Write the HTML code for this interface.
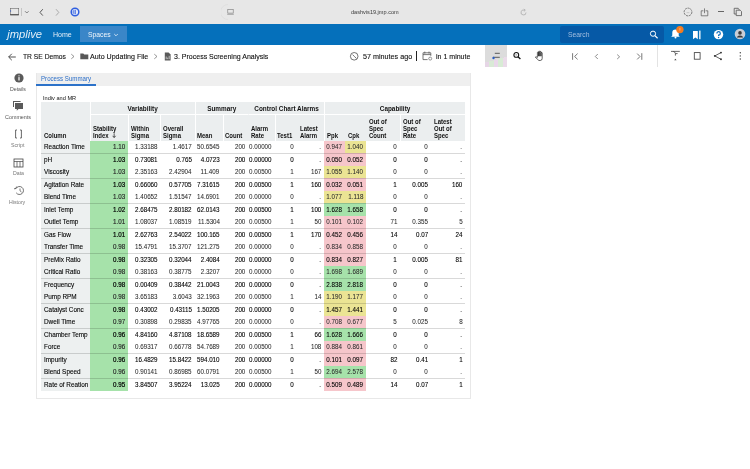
<!DOCTYPE html>
<html><head><meta charset="utf-8">
<style>
*{box-sizing:border-box;margin:0;padding:0}
html,body{width:750px;height:469px;overflow:hidden;background:#fff;-webkit-font-smoothing:antialiased;font-family:"Liberation Sans",sans-serif;color:#222}
.abs{position:absolute}
#chrome{position:absolute;left:0;top:0;width:750px;height:23.5px;background:#e7e7e7}
#nav{position:absolute;left:0;top:23.5px;width:750px;height:21px;background:#0570bb}
.t{position:absolute;white-space:nowrap;line-height:1}
#panel{position:absolute;left:36px;top:72.8px;width:434.5px;height:326.7px;border:1px solid #e8e8e8;border-top:none;background:#fff}
#tabstrip{position:absolute;left:0;top:0;width:100%;height:12.9px;background:#efefef}
table{position:absolute;left:4px;top:29.2px;border-collapse:separate;border-spacing:0;table-layout:fixed;width:424px;font-size:6.4px}
td{font-size:6.8px}
td,th{white-space:nowrap;overflow:hidden}
th{background:#ebeeef;font-weight:bold;color:#111;border-left:1px solid #fff;border-bottom:1px solid #fff;text-align:left;vertical-align:bottom;padding:0 2px 1.8px 1.9px;line-height:6.6px}
tr.h2 th{border-bottom:none}
th.nb{border-left-color:#ebeeef}
th.g{text-align:center;vertical-align:middle;padding:3px 0 0 0;height:13px}
th b{display:inline-block;transform:scaleX(.94);transform-origin:0 100%}
th.g b{transform:none}
td{height:12.5px;text-align:right;padding:0 2.8px 0 2px;color:#000;line-height:6px}
td i{font-style:normal;display:inline-block;margin-left:-12px;-webkit-text-stroke:0.1px #000;transform:scaleX(.92);transform-origin:100% 50%}
td.c i{transform-origin:0 50%;margin-left:0;transform:scaleX(.94)}
td.s i{-webkit-text-stroke:0.2px #000}
td.c{text-align:left;background:#edf0f0;padding-left:2.5px}
td.s{background:#a6e2aa;padding-right:3.5px}
td.p{background:#f6c6cb}
td.y{background:#ebe494}
td.gr{background:#a6e2aa}
tr:not(.sep):not(.h2) td i{color:#2a2a2a;-webkit-text-stroke:0.05px #333}
tr:not(.sep):not(.h2) td.c i{color:#000;-webkit-text-stroke:0.1px #000}
tr:not(.sep):not(.h2) td.s i{-webkit-text-stroke:0.15px #222}
tr.sep td i{-webkit-text-stroke:0.1px #000}
tr.sep td.s i{-webkit-text-stroke:0.2px #000}
tr.sep td{border-top:1px solid rgba(0,0,0,.15)}
#wrap{position:absolute;left:0;top:0;width:750px;height:469px;will-change:transform}
</style></head><body><div id="wrap">
<div id="chrome">
<svg class="abs" style="left:8px;top:6px" width="14" height="12" viewBox="0 0 14 12"><rect x="2.3" y="2.6" width="8.4" height="6.2" fill="none" stroke="#6a6a6a" stroke-width="0.6"/><path d="M2.3 8.8 H10.7" stroke="#333" stroke-width="0.9"/><path d="M2.6 4 V6" stroke="#3b5bb5" stroke-width="0.6"/></svg>
<div class="abs" style="left:21.3px;top:8px;width:0.5px;height:8px;background:#c4c4c4"></div>
<svg class="abs" style="left:24px;top:10px" width="6" height="4" viewBox="0 0 6 4"><path d="M1 1.2 L2.8 3 L4.6 1.2" fill="none" stroke="#555" stroke-width="0.7"/></svg>
<svg class="abs" style="left:38px;top:8px" width="7" height="9" viewBox="0 0 7 9"><path d="M4.8 1.2 L2 4.4 L4.8 7.6" fill="none" stroke="#333" stroke-width="0.8"/></svg>
<svg class="abs" style="left:54px;top:8px" width="7" height="9" viewBox="0 0 7 9"><path d="M2 1.2 L4.8 4.4 L2 7.6" fill="none" stroke="#9a9a9a" stroke-width="0.8"/></svg>
<svg class="abs" style="left:69.5px;top:6.8px" width="10" height="10" viewBox="0 0 10 10"><circle cx="5" cy="5" r="3.8" fill="#e8ecf8" stroke="#2f5fe0" stroke-width="1.5"/><rect x="4.6" y="2.8" width="1.1" height="4.4" fill="#2f5fe0"/><path d="M3.6 3.4 Q2.4 5 3.6 6.6" fill="none" stroke="#2f5fe0" stroke-width="0.9"/></svg>
<svg class="abs" style="left:221px;top:4px" width="8" height="16" viewBox="0 0 8 16"><path d="M7 0.5 A7.5 7.5 0 0 0 7 15.5" fill="none" stroke="#dadada" stroke-width="0.6"/></svg>
<svg class="abs" style="left:226px;top:8px" width="9" height="8" viewBox="0 0 9 8"><rect x="1.8" y="1.3" width="5.4" height="3.8" fill="none" stroke="#777" stroke-width="0.6"/><path d="M1.2 6.3 H7.8" stroke="#777" stroke-width="0.6"/></svg>
<div class="t" style="left:350.70px;top:9.05px;font-size:6.2px;color:#3a3a3a;transform:scaleX(0.9);transform-origin:0 0;">dashvis19.jmp.com</div>
<svg class="abs" style="left:518.5px;top:7.5px" width="9" height="9" viewBox="0 0 9 9"><path d="M7 4.5 A2.5 2.5 0 1 1 5.5 2.2" fill="none" stroke="#999" stroke-width="0.6"/><path d="M4.8 1 L6.3 2.2 L4.9 3.4" fill="none" stroke="#999" stroke-width="0.6"/></svg>
<svg class="abs" style="left:683px;top:6.7px" width="10" height="10" viewBox="0 0 10 10"><circle cx="5" cy="5" r="3.9" fill="none" stroke="#555" stroke-width="0.7" stroke-dasharray="2.2 0.7"/><path d="M3.6 5.6 H6.4" stroke="#999" stroke-width="0.4"/></svg>
<svg class="abs" style="left:700px;top:6.5px" width="9" height="10" viewBox="0 0 9 10"><path d="M3.4 3.8 H1.2 V8.8 H7.8 V3.8 H5.6" fill="none" stroke="#555" stroke-width="0.7"/><path d="M4.5 6.2 V1.4" fill="none" stroke="#555" stroke-width="0.7"/></svg>
<div class="abs" style="left:718px;top:11.2px;width:6px;height:0.7px;background:#666"></div>
<svg class="abs" style="left:733px;top:7px" width="10" height="10" viewBox="0 0 10 10"><path d="M1.2 1.3 H5.2 L6 2.3 V7 H1.2 Z" fill="none" stroke="#555" stroke-width="0.8"/><path d="M3.2 3.2 H7.2 L8.5 4.5 V8.6 H3.2 Z" fill="#e7e7e7" stroke="#555" stroke-width="0.8"/></svg>
</div>
<div id="nav">
<div class="t" style="left:7.2px;top:5.3px;font-size:11.2px;font-style:italic;color:#fff;opacity:.88">jmplive</div>
<div class="t" style="left:53.00px;top:7.00px;font-size:7.2px;color:#e4edf7;transform:scaleX(0.98);transform-origin:0 0;">Home</div>
<div class="abs" style="left:80px;top:2.5px;width:46.5px;height:15.8px;background:#3a86c8"></div>
<div class="t" style="left:87.70px;top:7.00px;font-size:7.2px;color:#f2f6fb;transform:scaleX(0.94);transform-origin:0 0;">Spaces</div>
<svg class="abs" style="left:113px;top:9px" width="6" height="4" viewBox="0 0 6 4"><path d="M1.2 1 L3 2.8 L4.8 1" fill="none" stroke="#fff" stroke-width="0.7"/></svg>
<div class="abs" style="left:560px;top:2.6px;width:104.3px;height:17px;background:#0659a6;border-radius:2px"></div>
<div class="t" style="left:567.60px;top:7.17px;font-size:7px;color:#a3bddf;transform:scaleX(0.97);transform-origin:0 0;">Search</div>
<svg class="abs" style="left:648px;top:5px" width="12" height="12" viewBox="0 0 12 12"><circle cx="5" cy="4.7" r="2.6" fill="none" stroke="#fff" stroke-width="1"/><path d="M6.9 6.6 L9.6 9.2" stroke="#fff" stroke-width="1.2"/></svg>
<svg class="abs" style="left:669px;top:0.5px" width="16" height="16" viewBox="0 0 16 16"><path d="M2.2 12.8 L3.3 11.6 V8.6 A3.2 3.2 0 0 1 9.7 8.6 V11.6 L10.8 12.8 Z" fill="#fff"/><circle cx="6.5" cy="13.6" r="1" fill="#fff"/><circle cx="10.9" cy="5.6" r="3.7" fill="#f47b20"/><path d="M10.9 4 V6.6" stroke="#fbd5b5" stroke-width="0.6"/></svg>
<svg class="abs" style="left:692px;top:6.5px" width="10" height="10" viewBox="0 0 10 10"><path d="M1 1 H5.8 V9.2 L3.4 7.4 L1 9.2 Z" fill="#fff"/><rect x="7.2" y="0.6" width="1.3" height="8.6" fill="#fff"/></svg>
<svg class="abs" style="left:713px;top:5.2px" width="11" height="11" viewBox="0 0 11 11"><circle cx="5.5" cy="5.6" r="4.7" fill="#fff"/><path d="M3.9 4.4 A1.7 1.7 0 1 1 5.6 6.1 V7" fill="none" stroke="#0b6ebe" stroke-width="1.2"/><circle cx="5.6" cy="8.5" r="0.7" fill="#0b6ebe"/></svg>
<svg class="abs" style="left:733.5px;top:4.9px" width="12" height="12" viewBox="0 0 12 12"><circle cx="6" cy="6" r="5.3" fill="#c9ced6"/><circle cx="6" cy="4.9" r="1.8" fill="#3c3c3c"/><path d="M2.9 8.9 Q6 6 9.1 8.9 V9.4 H2.9 Z" fill="#3c3c3c"/></svg>
</div>
<svg class="abs" style="left:7px;top:51.5px" width="10" height="10" viewBox="0 0 10 10"><path d="M8.8 5 H1.8 M4.8 1.8 L1.6 5 L4.8 8.2" fill="none" stroke="#333" stroke-width="0.85"/></svg>
<div class="t" style="left:22.70px;top:52.72px;font-size:8px;color:#111;transform:scaleX(0.84);transform-origin:0 0;-webkit-text-stroke:0.12px #111;">TR SE Demos</div>
<svg class="abs" style="left:70px;top:53px" width="6" height="7" viewBox="0 0 6 7"><path d="M1.3 1.2 L4 3.5 L1.3 5.8" fill="none" stroke="#666" stroke-width="0.7"/></svg>
<svg class="abs" style="left:79.8px;top:53px" width="9" height="7" viewBox="0 0 9 7"><path d="M0.3 0.6 H3.3 L4.2 1.5 H8.3 V6.3 H0.3 Z" fill="#585858"/></svg>
<div class="t" style="left:89.70px;top:52.72px;font-size:8px;color:#111;transform:scaleX(0.886);transform-origin:0 0;-webkit-text-stroke:0.12px #111;">Auto Updating File</div>
<svg class="abs" style="left:153px;top:53px" width="6" height="7" viewBox="0 0 6 7"><path d="M1.3 1.2 L4 3.5 L1.3 5.8" fill="none" stroke="#666" stroke-width="0.7"/></svg>
<svg class="abs" style="left:163.5px;top:52px" width="8" height="9" viewBox="0 0 8 9"><path d="M0.8 0.6 H4.6 L6.6 2.6 V8.4 H0.8 Z" fill="#5a5a5a"/><path d="M2.2 4.5 V7.2 M3.7 5.6 V7.2 M5.2 3.8 V7.2" stroke="#fff" stroke-width="0.6"/></svg>
<div class="t" style="left:173.60px;top:52.72px;font-size:8px;color:#111;transform:scaleX(0.877);transform-origin:0 0;-webkit-text-stroke:0.12px #111;">3. Process Screening Analysis</div>
<svg class="abs" style="left:348.5px;top:51px" width="11" height="11" viewBox="0 0 11 11"><circle cx="5.2" cy="5.3" r="3.8" fill="none" stroke="#444" stroke-width="0.75"/><path d="M3.6 3.6 L5.5 5.6 L7.4 7.4" fill="none" stroke="#444" stroke-width="0.75"/></svg>
<div class="t" style="left:362.60px;top:52.72px;font-size:8px;color:#111;transform:scaleX(0.898);transform-origin:0 0;-webkit-text-stroke:0.12px #111;">57 minutes ago</div>
<div class="abs" style="left:415.9px;top:51.2px;width:0.9px;height:9.6px;background:#222"></div>
<svg class="abs" style="left:421.5px;top:50.8px" width="11" height="10" viewBox="0 0 11 10"><path d="M5.6 8.6 H1 V1.8 H8.8 V4.8" fill="none" stroke="#555" stroke-width="0.8"/><path d="M1 3.6 H8.8 M2.8 0.6 V2.6 M7 0.6 V2.6" stroke="#555" stroke-width="0.8"/><circle cx="8.2" cy="7.6" r="1.5" fill="none" stroke="#555" stroke-width="0.6"/></svg>
<div class="t" style="left:435.80px;top:52.72px;font-size:8px;color:#111;transform:scaleX(0.879);transform-origin:0 0;-webkit-text-stroke:0.12px #111;">in 1 minute</div>
<div class="abs" style="left:485px;top:45.3px;width:21.8px;height:21.7px;background:#dcdcdc"></div>
<div class="abs" style="left:485px;top:57px;width:21.8px;height:10px;background:linear-gradient(90deg,#e6d6e6 0 20%,#d9ead6 20% 40%,#e9d8ea 40% 60%,#d8ebd5 60% 80%,#eadbe9 80%)"></div>
<div class="abs" style="left:485px;top:57px;width:21.8px;height:10px;background:linear-gradient(165deg,#dcdcdc 0 35%,transparent 35%)"></div>
<svg class="abs" style="left:490px;top:50px" width="12" height="10" viewBox="0 0 12 10"><path d="M4.8 3.3 H9.8 M3 7.3 H9.8" stroke="#3a3a3a" stroke-width="0.8"/><circle cx="3.5" cy="8" r="1.2" fill="#2b5fc4"/></svg>
<svg class="abs" style="left:512px;top:51px" width="10" height="10" viewBox="0 0 10 10"><circle cx="4.3" cy="3.9" r="2.4" fill="none" stroke="#111" stroke-width="1.05"/><path d="M6 5.7 L8.4 8" stroke="#111" stroke-width="1.25"/><path d="M3.4 3.9 H5.2" stroke="#222" stroke-width="0.5"/></svg>
<svg class="abs" style="left:532.5px;top:49.5px" width="12" height="12" viewBox="0 0 12 12"><path d="M4.4 7.4 V2.6 A0.6 0.6 0 0 1 5.6 2.6 V6.2 V1.7 A0.6 0.6 0 0 1 6.8 1.7 V6.2 V2 A0.6 0.6 0 0 1 8 2 V6.2 V3 A0.6 0.6 0 0 1 9.2 3 V8.4 Q9.2 10.5 7.2 10.5 H5.9 L2.3 7.2 Q3 6.4 4.4 7.4" fill="#fff" stroke="#111" stroke-width="0.65" stroke-linejoin="round"/></svg>
<svg class="abs" style="left:571px;top:52px" width="9" height="9" viewBox="0 0 9 9"><path d="M1.6 1.2 V7.8 M6.6 1.6 L3.6 4.5 L6.6 7.4" fill="none" stroke="#555" stroke-width="0.8"/></svg>
<svg class="abs" style="left:593px;top:52px" width="7" height="9" viewBox="0 0 7 9"><path d="M4.8 2 L2.3 4.5 L4.8 7" fill="none" stroke="#666" stroke-width="0.75"/></svg>
<svg class="abs" style="left:615px;top:52px" width="7" height="9" viewBox="0 0 7 9"><path d="M2.2 2.6 L4.6 4.8 L2.2 7" fill="none" stroke="#666" stroke-width="0.75"/></svg>
<svg class="abs" style="left:635px;top:52px" width="9" height="9" viewBox="0 0 9 9"><path d="M6.8 1.2 V7.8 M2.2 1.6 L5 4.5 L2.2 7.4" fill="none" stroke="#555" stroke-width="0.8"/></svg>
<div class="abs" style="left:657.3px;top:45px;width:0.6px;height:22px;background:#e3e3e3"></div>
<svg class="abs" style="left:669px;top:49px" width="12" height="13" viewBox="0 0 12 13"><path d="M2 2.4 H10.8 M4.2 2.4 Q6.4 3 6.4 4.6 M6.4 4.6 H8.6 M6.4 4.6 V6.6" fill="none" stroke="#444" stroke-width="0.8"/><path d="M5.2 11.2 L6.4 9.8 L7.6 11.2 Z" fill="#444"/></svg>
<svg class="abs" style="left:692px;top:51px" width="10" height="10" viewBox="0 0 10 10"><rect x="2.3" y="1.6" width="5.8" height="6.6" fill="none" stroke="#444" stroke-width="0.85"/></svg>
<svg class="abs" style="left:713px;top:51px" width="10" height="10" viewBox="0 0 10 10"><path d="M8 1.6 L1.8 4.9 L8 8.3" fill="none" stroke="#333" stroke-width="0.8"/><circle cx="8" cy="1.6" r="0.95" fill="#333"/><circle cx="1.8" cy="4.9" r="0.95" fill="#333"/><circle cx="8" cy="8.3" r="0.95" fill="#333"/></svg>
<svg class="abs" style="left:737.5px;top:51px" width="5" height="10" viewBox="0 0 5 10"><circle cx="2.3" cy="1.8" r="0.7" fill="#444"/><circle cx="2.3" cy="4.9" r="0.7" fill="#444"/><circle cx="2.3" cy="8" r="0.7" fill="#444"/></svg>
<svg class="abs" style="left:13.5px;top:72.6px" width="10" height="10" viewBox="0 0 10 10"><circle cx="5" cy="5" r="4.6" fill="#5a5a5a"/><rect x="4.4" y="4.1" width="1.2" height="3.4" fill="#fff"/><circle cx="5" cy="2.8" r="0.65" fill="#fff"/></svg>
<div class="t" style="left:10.20px;top:87.49px;font-size:5.8px;color:#555;transform:scaleX(0.9);transform-origin:0 0;">Details</div>
<svg class="abs" style="left:12.3px;top:100px" width="12" height="12" viewBox="0 0 12 12"><path d="M1 1 H8.6 V2 H2 V7 H1 Z" fill="#5a5a5a"/><path d="M3 3 H11 V9 H6.5 L4.8 10.8 V9 H3 Z" fill="#5a5a5a"/></svg>
<div class="t" style="left:5.20px;top:114.99px;font-size:5.8px;color:#555;transform:scaleX(0.93);transform-origin:0 0;">Comments</div>
<svg class="abs" style="left:14px;top:129px" width="9" height="10" viewBox="0 0 9 10"><path d="M3 1 H1.6 V9 H3 M6 1 H7.4 V9 H6" fill="none" stroke="#444" stroke-width="0.8"/></svg>
<div class="t" style="left:11.20px;top:143.29px;font-size:5.8px;color:#777;transform:scaleX(0.9);transform-origin:0 0;">Script</div>
<svg class="abs" style="left:13px;top:158px" width="11" height="10" viewBox="0 0 11 10"><rect x="1" y="1" width="9" height="8" fill="none" stroke="#444" stroke-width="0.8"/><path d="M1 3.5 H10 M4 3.5 V9 M7 3.5 V9" stroke="#444" stroke-width="0.7"/></svg>
<div class="t" style="left:13.00px;top:171.09px;font-size:5.8px;color:#777;transform:scaleX(0.9);transform-origin:0 0;">Data</div>
<svg class="abs" style="left:12.5px;top:185px" width="12" height="11" viewBox="0 0 12 11"><path d="M3 3.5 A4 4 0 1 1 3.2 7.8" fill="none" stroke="#444" stroke-width="0.75"/><path d="M1 3.8 L3 3.5 L3.4 1.6" fill="none" stroke="#444" stroke-width="0.75"/><path d="M7 3.5 V5.8 L8.5 7" fill="none" stroke="#444" stroke-width="0.7"/></svg>
<div class="t" style="left:9.00px;top:199.89px;font-size:5.8px;color:#777;transform:scaleX(0.9);transform-origin:0 0;">History</div>
<div id="panel">
<div id="tabstrip"></div>
<div class="abs" style="left:-1px;top:11.7px;width:59.6px;height:1.4px;background:#2c72c9"></div>
<div class="t" style="left:3.80px;top:3.51px;font-size:6.6px;color:#2c6fc8;transform:scaleX(0.929);transform-origin:0 0;">Process Summary</div>
<div class="t" style="left:5.90px;top:22.89px;font-size:5.8px;color:#111;transform:scaleX(0.97);transform-origin:0 0;">Indiv and MR</div>
<table>
    <colgroup><col style="width:48.7px"><col style="width:38.8px"><col style="width:32px"><col style="width:34px"><col style="width:28px"><col style="width:25.5px"><col style="width:26.5px"><col style="width:22.5px"><col style="width:27px"><col style="width:21px"><col style="width:21px"><col style="width:34px"><col style="width:31px"><col style="width:34px"></colgroup>
    <tr><th rowspan="2" style="border-left:none;padding-left:3px;border-bottom:none"><b>Column</b></th><th class="g" colspan="3"><b>Variability</b></th><th class="g" colspan="2"><b>Summary</b></th><th class="g nb" colspan="3"><b>Control Chart Alarms</b></th><th class="g" colspan="5"><b>Capability</b></th></tr>
    <tr class="h2" style="height:26px"><th><b>Stability<br>Index <svg width="5" height="5" viewBox="0 0 5 5" style="margin-left:2px;vertical-align:-0.5px"><path d="M2.5 0.3 V4.5 M0.8 2.8 L2.5 4.5 L4.2 2.8" fill="none" stroke="#111" stroke-width="0.7"/></svg></b></th><th><b>Within<br>Sigma</b></th><th><b>Overall<br>Sigma</b></th><th><b>Mean</b></th><th><b>Count</b></th><th class="nb"><b>Alarm<br>Rate</b></th><th><b>Test1</b></th><th class="nb"><b>Latest<br>Alarm</b></th><th><b>Ppk</b></th><th class="nb"><b>Cpk</b></th><th class="nb"><b>Out of<br>Spec<br>Count</b></th><th><b>Out of<br>Spec<br>Rate</b></th><th class="nb"><b>Latest<br>Out of<br>Spec</b></th></tr>
    <tr><td class="c"><i>Reaction Time</i></td><td class="s"><i>1.10</i></td><td><i>1.33188</i></td><td><i>1.4617</i></td><td><i>50.6545</i></td><td><i>200</i></td><td><i>0.00000</i></td><td><i>0</i></td><td><i>.</i></td><td class="p"><i>0.947</i></td><td class="y"><i>1.040</i></td><td><i>0</i></td><td><i>0</i></td><td><i>.</i></td></tr>
    <tr class="sep"><td class="c"><i>pH</i></td><td class="s"><i>1.03</i></td><td><i>0.73081</i></td><td><i>0.765</i></td><td><i>4.0723</i></td><td><i>200</i></td><td><i>0.00000</i></td><td><i>0</i></td><td><i>.</i></td><td class="p"><i>0.050</i></td><td class="p"><i>0.052</i></td><td><i>0</i></td><td><i>0</i></td><td><i>.</i></td></tr>
    <tr><td class="c"><i>Viscosity</i></td><td class="s"><i>1.03</i></td><td><i>2.35163</i></td><td><i>2.42904</i></td><td><i>11.409</i></td><td><i>200</i></td><td><i>0.00500</i></td><td><i>1</i></td><td><i>167</i></td><td class="y"><i>1.055</i></td><td class="y"><i>1.140</i></td><td><i>0</i></td><td><i>0</i></td><td><i>.</i></td></tr>
    <tr class="sep"><td class="c"><i>Agitation Rate</i></td><td class="s"><i>1.03</i></td><td><i>0.66060</i></td><td><i>0.57705</i></td><td><i>7.31615</i></td><td><i>200</i></td><td><i>0.00500</i></td><td><i>1</i></td><td><i>160</i></td><td class="p"><i>0.032</i></td><td class="p"><i>0.051</i></td><td><i>1</i></td><td><i>0.005</i></td><td><i>160</i></td></tr>
    <tr><td class="c"><i>Blend Time</i></td><td class="s"><i>1.03</i></td><td><i>1.40652</i></td><td><i>1.51547</i></td><td><i>14.6901</i></td><td><i>200</i></td><td><i>0.00000</i></td><td><i>0</i></td><td><i>.</i></td><td class="y"><i>1.077</i></td><td class="y"><i>1.118</i></td><td><i>0</i></td><td><i>0</i></td><td><i>.</i></td></tr>
    <tr class="sep"><td class="c"><i>Inlet Temp</i></td><td class="s"><i>1.02</i></td><td><i>2.68475</i></td><td><i>2.80182</i></td><td><i>62.0143</i></td><td><i>200</i></td><td><i>0.00500</i></td><td><i>1</i></td><td><i>100</i></td><td class="gr"><i>1.628</i></td><td class="gr"><i>1.658</i></td><td><i>0</i></td><td><i>0</i></td><td><i>.</i></td></tr>
    <tr><td class="c"><i>Outlet Temp</i></td><td class="s"><i>1.01</i></td><td><i>1.08037</i></td><td><i>1.08519</i></td><td><i>11.5304</i></td><td><i>200</i></td><td><i>0.00500</i></td><td><i>1</i></td><td><i>50</i></td><td class="p"><i>0.101</i></td><td class="p"><i>0.102</i></td><td><i>71</i></td><td><i>0.355</i></td><td><i>5</i></td></tr>
    <tr class="sep"><td class="c"><i>Gas Flow</i></td><td class="s"><i>1.01</i></td><td><i>2.62763</i></td><td><i>2.54022</i></td><td><i>100.165</i></td><td><i>200</i></td><td><i>0.00500</i></td><td><i>1</i></td><td><i>170</i></td><td class="p"><i>0.452</i></td><td class="p"><i>0.456</i></td><td><i>14</i></td><td><i>0.07</i></td><td><i>24</i></td></tr>
    <tr><td class="c"><i>Transfer Time</i></td><td class="s"><i>0.98</i></td><td><i>15.4791</i></td><td><i>15.3707</i></td><td><i>121.275</i></td><td><i>200</i></td><td><i>0.00000</i></td><td><i>0</i></td><td><i>.</i></td><td class="p"><i>0.834</i></td><td class="p"><i>0.858</i></td><td><i>0</i></td><td><i>0</i></td><td><i>.</i></td></tr>
    <tr class="sep"><td class="c"><i>PreMix Ratio</i></td><td class="s"><i>0.98</i></td><td><i>0.32305</i></td><td><i>0.32044</i></td><td><i>2.4084</i></td><td><i>200</i></td><td><i>0.00000</i></td><td><i>0</i></td><td><i>.</i></td><td class="p"><i>0.834</i></td><td class="p"><i>0.827</i></td><td><i>1</i></td><td><i>0.005</i></td><td><i>81</i></td></tr>
    <tr><td class="c"><i>Critical Ratio</i></td><td class="s"><i>0.98</i></td><td><i>0.38163</i></td><td><i>0.38775</i></td><td><i>2.3207</i></td><td><i>200</i></td><td><i>0.00000</i></td><td><i>0</i></td><td><i>.</i></td><td class="gr"><i>1.698</i></td><td class="gr"><i>1.689</i></td><td><i>0</i></td><td><i>0</i></td><td><i>.</i></td></tr>
    <tr class="sep"><td class="c"><i>Frequency</i></td><td class="s"><i>0.98</i></td><td><i>0.00409</i></td><td><i>0.38442</i></td><td><i>21.0043</i></td><td><i>200</i></td><td><i>0.00000</i></td><td><i>0</i></td><td><i>.</i></td><td class="gr"><i>2.838</i></td><td class="gr"><i>2.818</i></td><td><i>0</i></td><td><i>0</i></td><td><i>.</i></td></tr>
    <tr><td class="c"><i>Pump RPM</i></td><td class="s"><i>0.98</i></td><td><i>3.65183</i></td><td><i>3.6043</i></td><td><i>32.1963</i></td><td><i>200</i></td><td><i>0.00500</i></td><td><i>1</i></td><td><i>14</i></td><td class="y"><i>1.190</i></td><td class="y"><i>1.177</i></td><td><i>0</i></td><td><i>0</i></td><td><i>.</i></td></tr>
    <tr class="sep"><td class="c"><i>Catalyst Conc</i></td><td class="s"><i>0.98</i></td><td><i>0.43002</i></td><td><i>0.43115</i></td><td><i>1.50205</i></td><td><i>200</i></td><td><i>0.00000</i></td><td><i>0</i></td><td><i>.</i></td><td class="y"><i>1.457</i></td><td class="y"><i>1.441</i></td><td><i>0</i></td><td><i>0</i></td><td><i>.</i></td></tr>
    <tr><td class="c"><i>Dwell Time</i></td><td class="s"><i>0.97</i></td><td><i>0.30898</i></td><td><i>0.29835</i></td><td><i>4.97765</i></td><td><i>200</i></td><td><i>0.00000</i></td><td><i>0</i></td><td><i>.</i></td><td class="p"><i>0.708</i></td><td class="p"><i>0.677</i></td><td><i>5</i></td><td><i>0.025</i></td><td><i>8</i></td></tr>
    <tr class="sep"><td class="c"><i>Chamber Temp</i></td><td class="s"><i>0.96</i></td><td><i>4.84160</i></td><td><i>4.87108</i></td><td><i>18.6589</i></td><td><i>200</i></td><td><i>0.00500</i></td><td><i>1</i></td><td><i>66</i></td><td class="gr"><i>1.628</i></td><td class="gr"><i>1.666</i></td><td><i>0</i></td><td><i>0</i></td><td><i>.</i></td></tr>
    <tr><td class="c"><i>Force</i></td><td class="s"><i>0.96</i></td><td><i>0.69317</i></td><td><i>0.66778</i></td><td><i>54.7689</i></td><td><i>200</i></td><td><i>0.00500</i></td><td><i>1</i></td><td><i>108</i></td><td class="p"><i>0.884</i></td><td class="p"><i>0.861</i></td><td><i>0</i></td><td><i>0</i></td><td><i>.</i></td></tr>
    <tr class="sep"><td class="c"><i>Impurity</i></td><td class="s"><i>0.96</i></td><td><i>16.4829</i></td><td><i>15.8422</i></td><td><i>594.010</i></td><td><i>200</i></td><td><i>0.00000</i></td><td><i>0</i></td><td><i>.</i></td><td class="p"><i>0.101</i></td><td class="p"><i>0.097</i></td><td><i>82</i></td><td><i>0.41</i></td><td><i>1</i></td></tr>
    <tr><td class="c"><i>Blend Speed</i></td><td class="s"><i>0.96</i></td><td><i>0.90141</i></td><td><i>0.86985</i></td><td><i>60.0791</i></td><td><i>200</i></td><td><i>0.00500</i></td><td><i>1</i></td><td><i>50</i></td><td class="gr"><i>2.694</i></td><td class="gr"><i>2.578</i></td><td><i>0</i></td><td><i>0</i></td><td><i>.</i></td></tr>
    <tr class="sep"><td class="c"><i>Rate of Reation</i></td><td class="s"><i>0.95</i></td><td><i>3.84507</i></td><td><i>3.95224</i></td><td><i>13.025</i></td><td><i>200</i></td><td><i>0.00000</i></td><td><i>0</i></td><td><i>.</i></td><td class="p"><i>0.509</i></td><td class="p"><i>0.489</i></td><td><i>14</i></td><td><i>0.07</i></td><td><i>1</i></td></tr>
  </table>
</div>
</div></body></html>
